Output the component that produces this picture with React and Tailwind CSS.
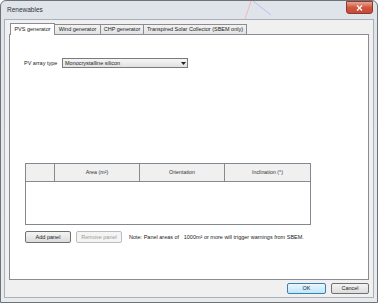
export default function App() {
  const font = { fontFamily: '"Liberation Sans", Arial, sans-serif' };
  return (
    <div className="w-[378px] h-[303px] bg-white overflow-hidden whitespace-nowrap" style={font}>
      <div className="relative w-[378px] h-[303px] rounded-t-[6px] border border-[#6f7378] bg-gradient-to-b from-[#dfe4ea] to-[#e8ebee] flex flex-col text-[#1e1e1e]">
        <svg className="absolute left-[230px] top-0" width="50" height="18" viewBox="0 0 50 18">
          <line x1="20" y1="0" x2="14" y2="18" stroke="#f2b8b8" strokeWidth="1" />
          <line x1="22" y1="0" x2="40" y2="14" stroke="#b8c0f2" strokeWidth="1" />
        </svg>
        <div className="h-[18px] flex items-center pl-[6px] text-[6.5px] text-[#333]">Renewables</div>
        <div className="absolute right-[4px] top-0 w-[27px] h-[13px] rounded-b-[3px] border border-[#8a3a2e] bg-gradient-to-b from-[#e8a493] via-[#d2553e] to-[#c84a35] flex items-center justify-center">
          <svg width="7" height="6" viewBox="0 0 7 6">
            <path d="M1 0.5 L6 5.5 M6 0.5 L1 5.5" stroke="#fff" strokeWidth="1.4" />
          </svg>
        </div>
        <div className="flex-1 mx-[3px] mb-[4px] border border-[#a9b0b8] bg-[#f0f0f0] flex flex-col px-[4px] pt-[1px]">
          <div className="flex items-end h-[13px] pl-[1px] text-[5.5px] text-[#222]">
            <div className="relative z-10 h-[12px] flex items-center border border-b-0 border-[#898c95] bg-white -mb-px pb-[1px] w-[45px] justify-center">PVS generator</div>
            <div className="h-[10px] flex items-center justify-center border border-b-0 border-l-0 border-[#898c95] bg-gradient-to-b from-[#f2f2f2] to-[#e3e3e3] w-[46px]">Wind generator</div>
            <div className="h-[10px] flex items-center justify-center border border-b-0 border-l-0 border-[#898c95] bg-gradient-to-b from-[#f2f2f2] to-[#e3e3e3] w-[43px]">CHP generator</div>
            <div className="h-[10px] flex items-center justify-center border border-b-0 border-l-0 border-[#898c95] bg-gradient-to-b from-[#f2f2f2] to-[#e3e3e3] w-[103px]">Transpired Solar Collector (SBEM only)</div>
          </div>
          <div className="h-[246px] border border-[#898c95] bg-white flex flex-col pl-[14px] text-[5.5px] text-[#222]">
            <div className="mt-[23px] flex items-center h-[10px]">
              <span className="w-[38px]">PV array type</span>
              <div className="w-[126px] h-[10px] border border-[#7a7a7a] bg-gradient-to-b from-[#f5f5f5] to-[#e1e1e1] flex items-center pl-[2px] justify-between">
                <span>Monocrystalline silicon</span>
                <div className="w-[8px] h-[8px] flex items-center justify-center">
                  <svg width="5" height="3" viewBox="0 0 5 3"><path d="M0 0 L5 0 L2.5 3 Z" fill="#222" /></svg>
                </div>
              </div>
            </div>
            <div className="mt-[95px] ml-[1px] w-[286px] h-[62px] border border-[#828790] bg-white flex flex-col">
              <div className="flex h-[18px] border-b border-[#8a8a8a] bg-[#f0f0f0] text-[5.3px] text-[#333]">
                <div className="w-[29px] border-r border-[#8a8a8a]"></div>
                <div className="w-[85px] border-r border-[#8a8a8a] flex items-center justify-center">Area (m²)</div>
                <div className="w-[85px] border-r border-[#8a8a8a] flex items-center justify-center">Orientation</div>
                <div className="flex-1 flex items-center justify-center">Inclination (°)</div>
              </div>
            </div>
            <div className="mt-[6px] ml-[1px] flex items-center h-[12px]">
              <div className="w-[46px] h-[12px] rounded-[2px] border border-[#707070] bg-gradient-to-b from-[#f4f4f4] to-[#dcdcdc] flex items-center justify-center">Add panel</div>
              <div className="ml-[5px] w-[46px] h-[12px] rounded-[2px] border border-[#bcbcbc] bg-[#f4f4f4] text-[#9a9a9a] flex items-center justify-center">Remove panel</div>
              <span className="ml-[7px] text-[5.5px]">Note: Panel areas of &nbsp;&nbsp;1000m² or more will trigger warnings from SBEM.</span>
            </div>
          </div>
          <div className="flex-1 flex justify-end items-center gap-[5px]">
            <div className="w-[39px] h-[11px] rounded-[2px] border border-[#3c7fb1] bg-gradient-to-b from-[#eaf6fd] to-[#bee6fd] flex items-center justify-center text-[5.5px]">OK</div>
            <div className="w-[38px] h-[11px] rounded-[2px] border border-[#707070] bg-gradient-to-b from-[#f4f4f4] to-[#dcdcdc] flex items-center justify-center text-[5.5px]">Cancel</div>
          </div>
        </div>
      </div>
    </div>
  );
}
